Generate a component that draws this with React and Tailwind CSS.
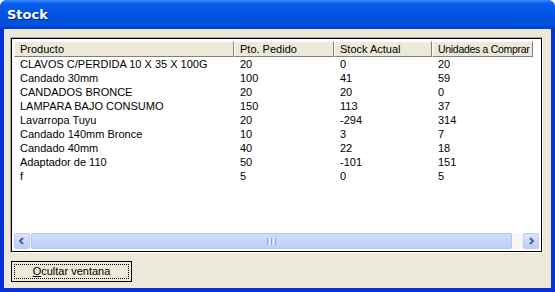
import React from "react";

const rows = [
  ["CLAVOS C/PERDIDA 10 X 35  X 100G", "20", "0", "20"],
  ["Candado 30mm", "100", "41", "59"],
  ["CANDADOS BRONCE", "20", "20", "0"],
  ["LAMPARA BAJO CONSUMO", "150", "113", "37"],
  ["Lavarropa Tuyu", "20", "-294", "314"],
  ["Candado 140mm Bronce", "10", "3", "7"],
  ["Candado 40mm", "40", "22", "18"],
  ["Adaptador de 110", "50", "-101", "151"],
  ["f", "5", "0", "5"],
];

const cols = ["w-[220px]", "w-[100px]", "w-[98px]", "w-[101px]"];
const heads = ["Producto", "Pto. Pedido", "Stock Actual", "Unidades a Comprar"];

function Arrow({ dir }) {
  return (
    <svg width="8" height="8" viewBox="0 0 8 8">
      {dir === "left" ? (
        <path d="M5 1 L2 4 L5 7" stroke="#4D6185" strokeWidth="2" fill="none" />
      ) : (
        <path d="M3 1 L6 4 L3 7" stroke="#4D6185" strokeWidth="2" fill="none" />
      )}
    </svg>
  );
}

export default function App() {
  return (
    <div
      className="w-[555px] h-[292px] flex flex-col bg-[#0831D9] rounded-t-[7px] overflow-hidden"
      style={{ fontFamily: '"Liberation Sans", Arial, sans-serif' }}
    >
      <div className="h-[29px] shrink-0 flex items-center pl-[7px] bg-[linear-gradient(to_bottom,#3A8CFF_0%,#0A5FF0_12%,#0054E3_50%,#0050DD_85%,#0040C8_100%)]">
        <span className="text-white font-bold text-[13px] [text-shadow:1px_1px_0_#0A1E8C]" style={{ fontFamily: '"DejaVu Sans", sans-serif' }}>
          Stock
        </span>
      </div>
      <div className="flex-1 flex mx-[4px] mb-[4px] bg-[#ECE9D8] flex-col pl-[6px] pr-[8px] pt-[8px]">
        <div className="h-[216px] border border-t-[#ACA899] border-l-[#ACA899] border-r-white border-b-white">
          <div className="h-full border border-black bg-white flex flex-col p-[2px]">
            <div className="flex h-[16px] shrink-0 text-[11px] text-black leading-[14px]">
              {heads.map((h, i) => (
                <div
                  key={h}
                  className={`${cols[i]} shrink-0 bg-[#ECE9D8] border-t border-l border-t-white border-l-white border-r border-b border-r-[#808080] border-b-[#808080] pl-[5px] whitespace-nowrap overflow-hidden ${i === 3 ? "text-[10.5px] tracking-[-0.3px] pl-[4px]" : ""}`}
                >
                  {h}
                </div>
              ))}
            </div>
            <div className="flex-1 flex flex-col text-[11px] text-black leading-[14px]">
              {rows.map((r, ri) => (
                <div key={ri} className="flex h-[14px]">
                  {r.map((c, ci) => (
                    <div key={ci} className={`${cols[ci]} shrink-0 pl-[6px] whitespace-nowrap`}>
                      {c}
                    </div>
                  ))}
                </div>
              ))}
            </div>
            <div className="h-[16px] shrink-0 flex bg-[#F7F6F1]">
              <div className="w-[16px] h-[16px] rounded-[2px] border border-[#B9C9F3] bg-[linear-gradient(to_bottom,#DCE6FD,#BACEF9)] flex items-center justify-center">
                <Arrow dir="left" />
              </div>
              <div className="flex-1 mx-[1px] rounded-[2px] border border-[#B2C6F5] bg-[linear-gradient(to_bottom,#CFDCFB,#BDD0FA)] flex items-center justify-center">
                <div className="flex gap-[1px]">
                  <div className="w-[1px] h-[7px] bg-[#8EA7E6]" />
                  <div className="w-[1px] h-[7px] bg-[#EEF3FF]" />
                  <div className="w-[1px] h-[7px] bg-[#8EA7E6]" />
                  <div className="w-[1px] h-[7px] bg-[#EEF3FF]" />
                  <div className="w-[1px] h-[7px] bg-[#8EA7E6]" />
                </div>
              </div>
              <div className="w-[10px]" />
              <div className="w-[16px] h-[16px] rounded-[2px] border border-[#B9C9F3] bg-[linear-gradient(to_bottom,#DCE6FD,#BACEF9)] flex items-center justify-center">
                <Arrow dir="right" />
              </div>
            </div>
          </div>
        </div>
        <div className="mt-[8px] ml-[1px] w-[121px] h-[21px] border border-black bg-[#ECE9D8] p-[2px]">
          <div className="h-full border border-dotted border-black flex items-center justify-center text-[11px] text-black">
            <span>
              <span className="underline">O</span>cultar ventana
            </span>
          </div>
        </div>
      </div>
    </div>
  );
}
